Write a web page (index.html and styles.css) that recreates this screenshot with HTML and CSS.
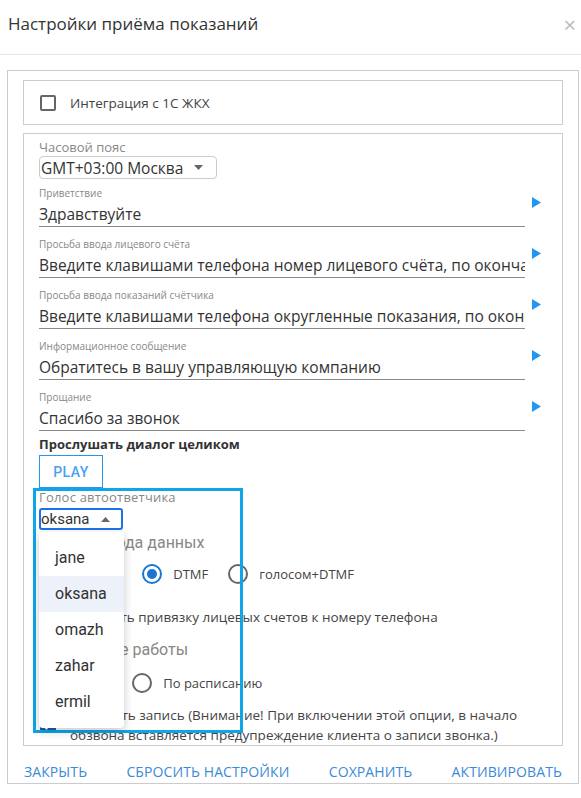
FILE: index.html
```html
<!DOCTYPE html>
<html lang="ru">
<head>
<meta charset="utf-8">
<title>Настройки приёма показаний</title>
<link rel="stylesheet" href="styles.css">
</head>
<body>
<div class="modal">
  <header class="modal-header">
    <h1 class="modal-title">Настройки приёма показаний</h1>
    <span class="close">×</span>
  </header>
  <div class="modal-body">
    <div class="panel">
      <div class="box box-integration">
        <label class="check"><span class="checkbox"></span><span class="check-label">Интеграция с 1С ЖКХ</span></label>
      </div>
      <div class="box box-settings">
        <div class="tz-label">Часовой пояс</div>
        <div class="select select-tz"><span>GMT+03:00 Москва</span><svg class="caret" width="9" height="5" viewBox="0 0 9 5"><path d="M0 0H9L4.5 5Z" fill="#666"/></svg></div>

        <div class="field-row field-row-first">
          <div class="field">
            <div class="field-label">Приветствие</div>
            <div class="field-input">Здравствуйте</div>
          </div>
          <svg class="play-tri" width="9" height="11" viewBox="0 0 9 11"><path d="M0 0L9 5.5L0 11Z" fill="#2196f3"/></svg>
        </div>
        <div class="field-row">
          <div class="field">
            <div class="field-label">Просьба ввода лицевого счёта</div>
            <div class="field-input">Введите клавишами телефона номер лицевого счёта, по окончании нажмите решётку</div>
          </div>
          <svg class="play-tri" width="9" height="11" viewBox="0 0 9 11"><path d="M0 0L9 5.5L0 11Z" fill="#2196f3"/></svg>
        </div>
        <div class="field-row">
          <div class="field">
            <div class="field-label">Просьба ввода показаний счётчика</div>
            <div class="field-input">Введите клавишами телефона округленные показания, по окончании нажмите решётку</div>
          </div>
          <svg class="play-tri" width="9" height="11" viewBox="0 0 9 11"><path d="M0 0L9 5.5L0 11Z" fill="#2196f3"/></svg>
        </div>
        <div class="field-row">
          <div class="field">
            <div class="field-label">Информационное сообщение</div>
            <div class="field-input">Обратитесь в вашу управляющую компанию</div>
          </div>
          <svg class="play-tri" width="9" height="11" viewBox="0 0 9 11"><path d="M0 0L9 5.5L0 11Z" fill="#2196f3"/></svg>
        </div>
        <div class="field-row">
          <div class="field">
            <div class="field-label">Прощание</div>
            <div class="field-input">Спасибо за звонок</div>
          </div>
          <svg class="play-tri" width="9" height="11" viewBox="0 0 9 11"><path d="M0 0L9 5.5L0 11Z" fill="#2196f3"/></svg>
        </div>

        <div class="listen-title">Прослушать диалог целиком</div>
        <button class="btn-play" type="button">PLAY</button>

        <div class="voice">
          <div class="voice-label">Голос автоответчика</div>
          <div class="select-wrap">
            <div class="select select-voice"><span>oksana</span><svg class="caret" width="9" height="5" viewBox="0 0 9 5"><path d="M0 5H9L4.5 0Z" fill="#666"/></svg></div>
            <ul class="menu">
              <li class="menu-item">jane</li>
              <li class="menu-item selected">oksana</li>
              <li class="menu-item">omazh</li>
              <li class="menu-item">zahar</li>
              <li class="menu-item">ermil</li>
            </ul>
          </div>

          <div class="section-title">Способ ввода данных</div>
          <div class="radio-row">
            <label class="radio"><span class="radio-circle"></span><span class="radio-label">голосом</span></label>
            <label class="radio"><span class="radio-circle checked"></span><span class="radio-label">DTMF</span></label>
            <label class="radio"><span class="radio-circle"></span><span class="radio-label">голосом+DTMF</span></label>
          </div>
          <label class="check check-row"><span class="checkbox"></span><span class="check-label">Включить привязку лицевых счетов к номеру телефона</span></label>

          <div class="section-title section-title-2">Расписание работы</div>
          <div class="radio-row radio-row-2">
            <label class="radio"><span class="radio-circle"></span><span class="radio-label">Всегда</span></label>
            <label class="radio"><span class="radio-circle"></span><span class="radio-label">По расписанию</span></label>
          </div>
          <label class="check check-multi"><span class="checkbox checked"><svg width="12" height="10" viewBox="0 0 12 10"><path d="M1 5L4.5 8.5L11 1.5" fill="none" stroke="#fff" stroke-width="2"/></svg></span><span class="check-label">Включить запись (Внимание! При включении этой опции, в начало обзвона вставляется предупреждение клиента о записи звонка.)</span></label>

          <div class="highlight"></div>
        </div>
      </div>
      <div class="footer">
        <button class="footer-btn" type="button">Закрыть</button>
        <button class="footer-btn" type="button">Сбросить настройки</button>
        <button class="footer-btn" type="button">Сохранить</button>
        <button class="footer-btn" type="button">Активировать</button>
      </div>
    </div>
  </div>
</div>
</body>
</html>
```
FILE: styles.css
```css
* { box-sizing: border-box; }
html, body { margin: 0; padding: 0; background: #fff; }
body {
  font-family: "Open Sans", "Noto Sans", sans-serif;
  color: #333;
  width: 581px;
  height: 798px;
  overflow: hidden;
}

.modal-header {
  height: 55px;
  border-bottom: 1px solid #e5e5e5;
  display: flex;
  align-items: center;
  justify-content: space-between;
  padding: 0 5px 6px 8px;
}
.modal-title {
  margin: 0;
  font-size: 17px;
  font-weight: 400;
  line-height: 22px;
  color: #333;
}
.close {
  font-size: 22px;
  line-height: 1;
  color: #bbb;
}

.modal-body { padding: 15px 0 0 7px; }
.panel {
  width: 572px;
  border: 1px solid #ccc;
  padding: 9px 15px 0 15px;
}
.box { border: 1px solid #ccc; }
.box-integration {
  height: 45px;
  display: flex;
  align-items: center;
  padding-left: 16px;
}
.check { display: flex; align-items: center; }
.checkbox {
  width: 16px;
  height: 16px;
  border: 2px solid #666;
  border-radius: 2px;
  flex: none;
  display: flex;
  align-items: center;
  justify-content: center;
}
.checkbox.checked { background: #1a5fb4; border-color: #1a5fb4; }
.check-label {
  margin-left: 14px;
  font-size: 13.5px;
  line-height: 20px;
  color: #444;
}

.box-settings {
  margin-top: 8px;
  padding: 5px 20px 0 15px;
}
.tz-label {
  font-size: 13px;
  line-height: 16px;
  color: #888;
}
.select {
  display: flex;
  align-items: center;
  font-size: 15.5px;
  color: #333;
}
.select-tz {
  margin-top: 1px;
  width: 178px;
  height: 23px;
  border: 1px solid #ccc;
  border-radius: 4px;
  padding-left: 1px;
}
.select-tz .caret { margin-left: 11px; }

.field-row { display: flex; margin-top: 10px; }
.field-row-first { margin-top: 7px; }
.field { width: 486px; }
.field-label {
  font-size: 10px;
  line-height: 15px;
  color: #888;
}
.field-input {
  margin-top: 3px;
  font-size: 15.5px;
  line-height: 20px;
  padding-bottom: 2px;
  border-bottom: 1px solid #888;
  white-space: nowrap;
  overflow: hidden;
  color: #333;
}
.play-tri { margin: 11px 0 0 7px; flex: none; }

.listen-title {
  margin-top: 5px;
  font-size: 13px;
  font-weight: 700;
  line-height: 16px;
  color: #333;
}
.btn-play {
  display: block;
  margin-top: 3px;
  width: 64px;
  height: 33px;
  border: 1px solid #2196f3;
  background: #fff;
  color: #4a9ff5;
  font-family: Roboto, sans-serif;
  font-weight: 500;
  font-size: 14px;
  letter-spacing: 0.5px;
  padding: 0;
}

.voice { position: relative; }
.voice-label {
  font-size: 13px;
  line-height: 19px;
  color: #888;
  letter-spacing: 0.2px;
}
.select-wrap { position: relative; margin-top: 1px; width: 84px; }
.select-voice {
  width: 84px;
  height: 22px;
  border: 2px solid #1a73e8;
  border-radius: 3px;
  padding-left: 0;
  font-family: Roboto, sans-serif;
  font-size: 15px;
}
.select-voice .caret { margin-left: 11px; }
.menu {
  position: absolute;
  left: 0;
  top: 24px;
  width: 85px;
  margin: 0;
  padding: 8px 0;
  list-style: none;
  background: #fff;
  border-radius: 4px;
  box-shadow: 0 3px 10px rgba(0, 0, 0, 0.22);
  z-index: 3;
}
.menu-item {
  height: 36px;
  line-height: 36px;
  padding-left: 16px;
  font-family: Roboto, sans-serif;
  font-size: 16px;
  color: #333;
}
.menu-item.selected { background: #edf2fa; }

.section-title {
  margin-top: 3px;
  font-family: Roboto, sans-serif;
  font-size: 16px;
  line-height: 20px;
  color: #888;
}
.section-title-2 { margin-top: 13px; }
.radio-row {
  display: flex;
  align-items: center;
  height: 28px;
  margin-top: 7px;
}
.radio-row-2 { margin-top: 9px; }
.radio { display: flex; align-items: center; margin-right: 20px; }
.radio-circle {
  width: 20px;
  height: 20px;
  border: 2px solid #666;
  border-radius: 50%;
  flex: none;
  display: flex;
  align-items: center;
  justify-content: center;
}
.radio-circle.checked { border-color: #1976d2; }
.radio-circle.checked::after {
  content: "";
  width: 10px;
  height: 10px;
  border-radius: 50%;
  background: #1976d2;
}
.radio-label {
  margin-left: 11px;
  font-size: 13px;
  color: #444;
}
.check-row { margin-top: 19px; }
.check-multi { margin-top: 8px; padding-left: 1px; }

.highlight {
  position: absolute;
  left: -6px;
  top: 0;
  width: 210px;
  height: 245px;
  border: 3px solid #0ea5e9;
  pointer-events: none;
  z-index: 2;
}

.footer {
  display: flex;
  justify-content: space-between;
  padding: 17px 1px 2px 1px;
}
.footer-btn {
  background: none;
  border: none;
  padding: 0;
  font-family: "Open Sans", sans-serif;
  font-size: 14px;
  line-height: 18px;
  text-transform: uppercase;
  letter-spacing: 0.1px;
  color: #3d8ad6;
}
```
